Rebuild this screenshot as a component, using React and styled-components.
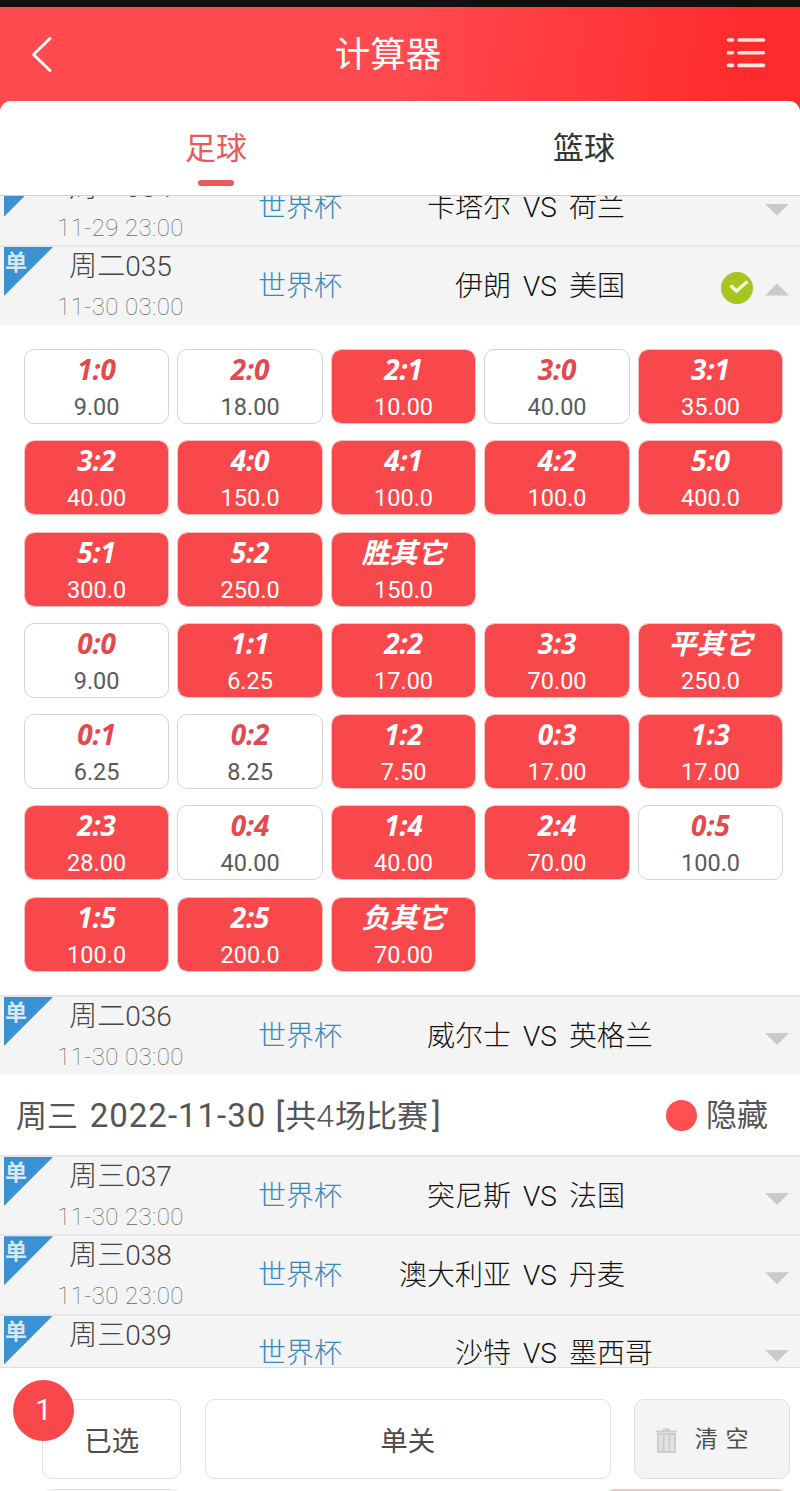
import React from "react";
import styled, { createGlobalStyle } from "styled-components";

const GlobalStyle = createGlobalStyle`
  * {
    box-sizing: border-box;
  }

  body {
    margin: 0;
    background: #fff;
    font-family: Roboto, "Noto Sans CJK SC", sans-serif;
  }
`;

const Page = styled.div`
  width: 800px;
  height: 1491px;
  overflow: hidden;
  display: flex;
  flex-direction: column;
  background: #fff;
`;

const StatusBar = styled.div`
  height: 7px;
  flex: none;
  background: #12100e;
`;

const Top = styled.div`
  flex: none;
  height: 188px;
  background: linear-gradient(100deg, #ff4b50 48%, #ff2a2b 92%);
`;

const Header = styled.header`
  height: 94px;
  display: flex;
  align-items: center;
  justify-content: space-between;
  padding: 0 33px 0 30px;
`;

const Title = styled.h1`
  margin: 2px 4px 0 0;
  color: #fff;
  font-size: 35.5px;
  font-weight: 400;
  line-height: 50px;
`;

const Tabs = styled.nav`
  height: 94px;
  display: flex;
  padding: 0 32px;
  background: #fff;
  border-radius: 11px 11px 0 0;
`;

const Tab = styled.div`
  flex: 1;
  display: flex;
  flex-direction: column;
  align-items: center;
  padding-top: 25px;
  font-size: 31px;
  line-height: 46px;
  color: ${({ $active }) => ($active ? "#e95a5c" : "#333")};

  &::after {
    content: "";
    width: 36px;
    height: 6px;
    margin-top: 8px;
    border-radius: 3px;
    background: ${({ $active }) => ($active ? "#e95a5c" : "transparent")};
  }
`;

const List = styled.main`
  flex: none;
  height: 1173px;
  overflow: hidden;
  border-top: 1px solid #cfcfcf;
  border-bottom: 1px solid #dedede;
`;

const FirstMatch = styled.div`
  margin-top: -30.3px;
`;

const Row = styled.div`
  position: relative;
  height: ${({ $tall }) => ($tall ? 80 : 79.3)}px;
  display: grid;
  grid-template-columns: 241px 118px 152px 58px 1fr auto;
  align-items: center;
  padding: 0 11px 1px 0;
  border-top: 2px solid #e6e6e6;
  background: #f4f4f4;
  font-size: 28px;
  font-weight: 300;
  line-height: 40px;
  white-space: nowrap;
`;

const Corner = styled.span`
  position: absolute;
  top: 0;
  left: 4px;
  width: 49px;
  height: 49px;
  padding-left: 1px;
  background: #3c91d2;
  clip-path: polygon(0 0, 100% 0, 0 100%);
  color: #d5e8f8;
  font-size: 22px;
  font-weight: 700;
  line-height: 32px;
`;

const When = styled.div`
  display: flex;
  flex-direction: column;
  align-items: center;
  align-self: start;
`;

const MatchId = styled.span`
  height: 40px;
  color: #444;
  line-height: 39px;
`;

const Time = styled.span`
  color: #666;
  font-size: 24px;
  font-weight: 100;
  letter-spacing: 0.4px;
  line-height: 40px;
`;

const League = styled.span`
  color: #3888bb;
  text-align: center;
`;

const Home = styled.span`
  color: #111;
  text-align: right;
`;

const Versus = styled.span`
  color: #111;
  text-align: center;
`;

const Away = styled.span`
  color: #111;
`;

const RowState = styled.div`
  display: flex;
  align-items: center;
  gap: 12px;
  padding-top: ${({ $open }) => ($open ? 1 : 4)}px;
`;

const Arrow = styled.i`
  width: 24px;
  height: 12px;
  margin-top: ${({ $up }) => ($up ? 4 : 0)}px;
  background: #cacaca;
  clip-path: ${({ $up }) =>
    $up ? "polygon(50% 0, 100% 100%, 0 100%)" : "polygon(0 0, 100% 0, 50% 100%)"};
`;

const Odds = styled.section`
  height: 670px;
  display: flex;
  flex-direction: column;
  gap: 16.3px;
  padding: 24px 16px 0 24px;
  background: #fff;
`;

const OddsRow = styled.div`
  display: grid;
  grid-template-columns: repeat(5, 145.2px);
  gap: 8.3px;
`;

const Cell = styled.div`
  height: 75px;
  display: flex;
  flex-direction: column;
  align-items: center;
  border: ${({ $picked }) => ($picked ? "1.5px solid #f3c3c3" : "1.5px solid #d4d4d4")};
  border-radius: 10px;
  background: ${({ $picked }) => ($picked ? "#f9484b" : "#fff")};
  background-clip: padding-box;
  color: ${({ $picked }) => ($picked ? "#fff" : "#5a5a5a")};
`;

const Score = styled.span`
  height: 37px;
  color: ${({ $picked }) => ($picked ? "#fff" : "#e04a50")};
  font-family: "Open Sans", "Noto Sans CJK SC", sans-serif;
  font-size: 28px;
  font-style: italic;
  font-weight: 700;
  line-height: 38px;
`;

const Price = styled.span`
  font-size: 23.5px;
  line-height: 40px;
`;

const DayBar = styled.div`
  height: 80px;
  display: flex;
  align-items: center;
  justify-content: space-between;
  padding: 2px 32px 0 16px;
  background: #fff;
  color: #555;
  font-size: 31px;
  line-height: 46px;
`;

const DayDate = styled.span`
  margin-left: 4px;
  font-size: 33px;
  letter-spacing: 1px;
`;

const Count = styled.span`
  font-size: 32px;
  font-weight: 300;
  letter-spacing: 1px;
`;

const Toggle = styled.div`
  display: flex;
  align-items: center;
  gap: 9px;
`;

const Dot = styled.i`
  width: 31px;
  height: 31px;
  margin-top: -2px;
  border-radius: 50%;
  background: #ff4f50;
`;

const Footer = styled.footer`
  height: 123px;
  display: flex;
  flex-direction: column;
  gap: 10px;
  padding: 31px 10px 0 42px;
`;

const FooterRow = styled.div`
  flex: none;
  display: flex;
  gap: 23.5px;
`;

const Button = styled.div`
  position: relative;
  width: ${({ $width }) => $width}px;
  height: 80px;
  display: flex;
  align-items: center;
  justify-content: center;
  gap: 18px;
  padding: ${({ $muted }) => ($muted ? "2px 20px 0 0" : "6px 0 0")};
  border: 1.5px solid ${({ $pink }) => ($pink ? "#f5c6c9" : "#dfdfdf")};
  border-radius: 10px;
  background: ${({ $muted, $pink }) => ($pink ? "#f5c6c9" : $muted ? "#f4f4f4" : "#fff")};
  color: #4c4c4c;
  font-size: ${({ $muted }) => ($muted ? 23 : 27.5)}px;
  line-height: 40px;
`;

const ClearLabel = styled.span`
  height: 42px;
  word-spacing: 2px;
  line-height: 42px;
`;

const NextRow = styled(FooterRow)`
  justify-content: space-between;
  padding-right: 2px;
`;

const Badge = styled.span`
  position: absolute;
  top: -20px;
  left: -30px;
  width: 61px;
  height: 61px;
  border-radius: 50%;
  background: #f9484b;
  color: #fff;
  font-size: 29px;
  line-height: 60px;
  text-align: center;
`;

const matches = {
  qatar: { id: "周二034", time: "11-29 23:00", home: "卡塔尔", away: "荷兰" },
  iran: { id: "周二035", time: "11-30 03:00", home: "伊朗", away: "美国" },
  wales: { id: "周二036", time: "11-30 03:00", home: "威尔士", away: "英格兰" },
};

const wednesday = [
  { id: "周三037", time: "11-30 23:00", home: "突尼斯", away: "法国" },
  { id: "周三038", time: "11-30 23:00", home: "澳大利亚", away: "丹麦" },
  { id: "周三039", home: "沙特", away: "墨西哥" },
];

// [score, price, picked]
const odds = [
  [["1:0", "9.00"], ["2:0", "18.00"], ["2:1", "10.00", true], ["3:0", "40.00"], ["3:1", "35.00", true]],
  [["3:2", "40.00", true], ["4:0", "150.0", true], ["4:1", "100.0", true], ["4:2", "100.0", true], ["5:0", "400.0", true]],
  [["5:1", "300.0", true], ["5:2", "250.0", true], ["胜其它", "150.0", true]],
  [["0:0", "9.00"], ["1:1", "6.25", true], ["2:2", "17.00", true], ["3:3", "70.00", true], ["平其它", "250.0", true]],
  [["0:1", "6.25"], ["0:2", "8.25"], ["1:2", "7.50", true], ["0:3", "17.00", true], ["1:3", "17.00", true]],
  [["2:3", "28.00", true], ["0:4", "40.00"], ["1:4", "40.00", true], ["2:4", "70.00", true], ["0:5", "100.0"]],
  [["1:5", "100.0", true], ["2:5", "200.0", true], ["负其它", "70.00", true]],
];

function BackIcon() {
  return (
    <svg width="24" height="38" viewBox="0 0 24 38" fill="none" stroke="#fff" strokeWidth="2.8" strokeLinecap="round" strokeLinejoin="round">
      <path d="M20 3.5 3.5 19.5 20 35.5" />
    </svg>
  );
}

function MenuIcon() {
  return (
    <svg width="41" height="32" viewBox="0 0 41 32" stroke="#ffe3e0" strokeWidth="3.6" strokeLinecap="round">
      <path d="M2.5 2h4M13 2h24.5M2.5 14.7h4M13 14.7h24.5M2.5 27.4h4M13 27.4h24.5" />
    </svg>
  );
}

function CheckIcon() {
  return (
    <svg width="32" height="32" viewBox="0 0 32 32" fill="none">
      <circle cx="16" cy="16" r="16" fill="#a7c520" />
      <path d="M9.5 13.5 15.5 19 26.500 9.500" stroke="#f4f9dc" strokeWidth="3.4" />
    </svg>
  );
}

function TrashIcon() {
  return (
    <svg width="21" height="25" viewBox="0 0 21 25" fill="none" stroke="#cdcdcd" strokeWidth="2">
      <rect x="2" y="6" width="17" height="18" fill="#e2e2e2" />
      <path d="M0 3.5h21M7 1.5h7M7.5 6v18M13.5 6v18" />
    </svg>
  );
}

function Match({ match, open, tall }) {
  return (
    <Row $tall={tall}>
      <Corner>单</Corner>
      <When>
        <MatchId>{match.id}</MatchId>
        {match.time && <Time>{match.time}</Time>}
      </When>
      <League>世界杯</League>
      <Home>{match.home}</Home>
      <Versus>VS</Versus>
      <Away>{match.away}</Away>
      <RowState $open={open}>
        {open && <CheckIcon />}
        <Arrow $up={open} />
      </RowState>
    </Row>
  );
}

function App() {
  return (
    <Page>
      <GlobalStyle />
      <StatusBar />
      <Top>
        <Header>
          <BackIcon />
          <Title>计算器</Title>
          <MenuIcon />
        </Header>
        <Tabs>
          <Tab $active>足球</Tab>
          <Tab>篮球</Tab>
        </Tabs>
      </Top>
      <List>
        <FirstMatch>
          <Match match={matches.qatar} />
        </FirstMatch>
        <Match match={matches.iran} open tall />
        <Odds>
          {odds.map((row, i) => (
            <OddsRow key={i}>
              {row.map(([score, price, picked]) => (
                <Cell key={score} $picked={picked}>
                  <Score $picked={picked}>{score}</Score>
                  <Price>{price}</Price>
                </Cell>
              ))}
            </OddsRow>
          ))}
        </Odds>
        <Match match={matches.wales} tall />
        <DayBar>
          <span>
            周三 <DayDate>2022-11-30 [</DayDate>共<Count>4</Count>场比赛<DayDate>]</DayDate>
          </span>
          <Toggle>
            <Dot />
            隐藏
          </Toggle>
        </DayBar>
        {wednesday.map((match) => (
          <Match key={match.id} match={match} />
        ))}
      </List>
      <Footer>
        <FooterRow>
          <Button $width={139.5}>
            <Badge>1</Badge>
            已选
          </Button>
          <Button $width={406}>单关</Button>
          <Button $width={156} $muted>
            <TrashIcon />
            <ClearLabel>清 空</ClearLabel>
          </Button>
        </FooterRow>
        <NextRow>
          <Button $width={140} />
          <Button $width={184} $pink />
        </NextRow>
      </Footer>
    </Page>
  );
}

export default App;
